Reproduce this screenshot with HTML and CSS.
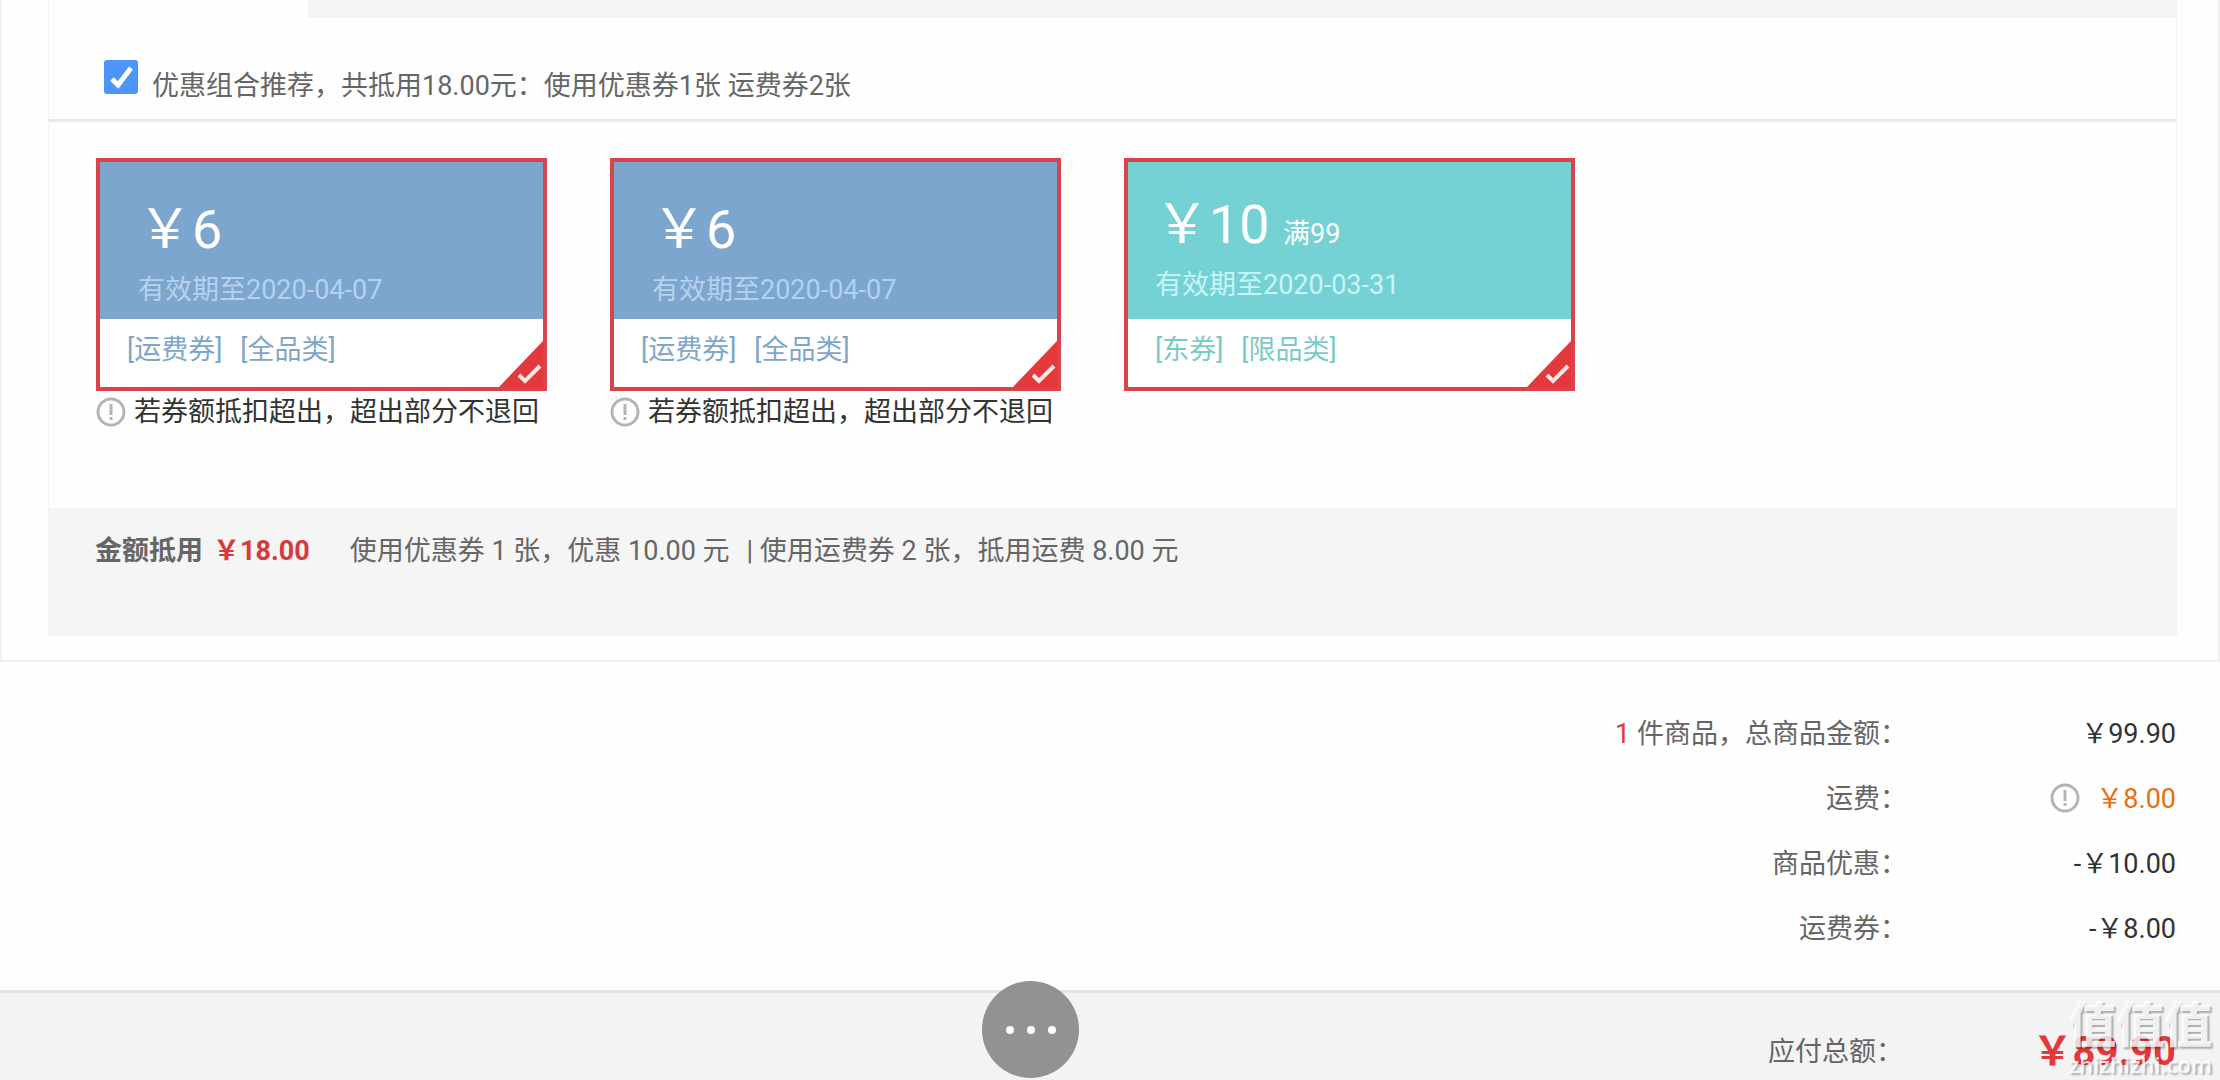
FILE: index.html
```html
<!DOCTYPE html>
<html lang="zh-CN">
<head>
<meta charset="utf-8">
<meta name="viewport" content="width=device-width, initial-scale=1">
<title>结算</title>
<link rel="stylesheet" href="styles.css">
</head>
<body>
<svg class="sprite" aria-hidden="true">
  <symbol id="icon-info" viewBox="0 0 30 30">
    <circle cx="15" cy="15" r="13" fill="none" stroke="#b4b4b4" stroke-width="3"/>
    <path d="M15 7v11M15 20v3" fill="none" stroke="#b4b4b4" stroke-width="3"/>
  </symbol>
  <symbol id="icon-corner" viewBox="0 0 44 46">
    <path d="M44 0V46H0Z" fill="#e4393c"/>
    <path d="M20 34l6 6L41 25" fill="none" stroke="#fde8e8" stroke-width="4"/>
  </symbol>
</svg>

<main class="checkout">
  <section class="discounts">
    <div class="panel">
      <div class="tabs"><div class="tab-active"></div></div>
      <label class="recommend">
        <span class="check">
          <input type="checkbox" checked>
          <svg viewBox="0 0 34 34" aria-hidden="true"><path d="M8 19l6 6L27 8" fill="none" stroke="#fff" stroke-width="5"/></svg>
        </span>
        <span class="recommend-text">优惠组合推荐，共抵用18.00元：使用优惠券1张 运费券2张</span>
      </label>
      <ul class="coupons">
        <li>
          <article class="coupon freight">
            <div class="coupon-top">
              <p class="amount">￥6</p>
              <p class="expiry">有效期至2020-04-07</p>
            </div>
            <p class="scope"><span>[运费券]</span><span>[全品类]</span></p>
            <svg class="corner" aria-hidden="true"><use href="#icon-corner"/></svg>
          </article>
          <p class="note"><svg class="info" aria-hidden="true"><use href="#icon-info"/></svg>若券额抵扣超出，超出部分不退回</p>
        </li>
        <li>
          <article class="coupon freight">
            <div class="coupon-top">
              <p class="amount">￥6</p>
              <p class="expiry">有效期至2020-04-07</p>
            </div>
            <p class="scope"><span>[运费券]</span><span>[全品类]</span></p>
            <svg class="corner" aria-hidden="true"><use href="#icon-corner"/></svg>
          </article>
          <p class="note"><svg class="info" aria-hidden="true"><use href="#icon-info"/></svg>若券额抵扣超出，超出部分不退回</p>
        </li>
        <li>
          <article class="coupon goods">
            <div class="coupon-top">
              <p class="amount">￥10 <small>满99</small></p>
              <p class="expiry">有效期至2020-03-31</p>
            </div>
            <p class="scope"><span>[东券]</span><span>[限品类]</span></p>
            <svg class="corner" aria-hidden="true"><use href="#icon-corner"/></svg>
          </article>
        </li>
      </ul>
      <div class="used">
        <strong class="used-title">金额抵用</strong>
        <strong class="used-sum">￥18.00</strong>
        <span class="used-goods">使用优惠券 1 张，优惠 10.00 元</span>
        <span>| 使用运费券 2 张，抵用运费 8.00 元</span>
      </div>
    </div>
  </section>

  <dl class="totals">
    <div class="row"><dt><em>1</em> 件商品，总商品金额：</dt><dd>￥99.90</dd></div>
    <div class="row"><dt>运费：</dt><dd class="fee"><svg class="info" aria-hidden="true"><use href="#icon-info"/></svg>￥8.00</dd></div>
    <div class="row"><dt>商品优惠：</dt><dd>-￥10.00</dd></div>
    <div class="row"><dt>运费券：</dt><dd>-￥8.00</dd></div>
  </dl>

  <footer class="payable">
    <span>应付总额：</span>
    <strong>￥89.90</strong>
  </footer>
</main>

<button class="more" type="button" aria-label="更多"><i></i><i></i><i></i></button>
<div class="watermark"><b>值值值</b><span>zhizhizhi.com</span></div>
</body>
</html>
```
FILE: styles.css
```css
* { box-sizing: border-box; }

body {
  margin: 0;
  background: #fefefe;
  color: #666;
  font: 27px/32px Roboto, "Noto Sans CJK SC", sans-serif;
}

p, ul, dl, dd { margin: 0; padding: 0; }
ul { list-style: none; }
em { font-style: normal; }
.sprite { display: none; }

.checkout {
  display: flex;
  flex-direction: column;
  min-height: 100vh;
}

/* Discount panel */
.discounts {
  padding: 0 41px 24px 46px;
  border: 2px solid #f0f0f0;
  border-top: 0;
}
.panel { border: solid #f3f3f3; border-width: 0 1px; }
.tabs { height: 18px; background: #f5f5f5; }
.tab-active { width: 259px; height: 100%; background: #fefefe; }

.recommend {
  display: flex;
  gap: 14px;
  padding: 42px 55px 17px;
  border-bottom: 3px solid #e9e9e9;
}
.recommend-text { padding-top: 10px; }
.check { display: grid; width: 34px; height: 34px; }
.check input, .check svg { grid-area: 1 / 1; width: 34px; height: 34px; margin: 0; }
.check input { appearance: none; border-radius: 3px; background: #4b96f8; }
.check svg { pointer-events: none; z-index: 1; }

/* Coupons */
.coupons {
  display: flex;
  flex-wrap: wrap;
  gap: 32px 63px;
  min-height: 386px;
  padding: 36px 47px;
}
.coupons li { width: 451px; }
.coupon {
  position: relative;
  border: 4px solid #d9434a;
  background: #fff;
}
.coupon-top { height: 157px; color: #fff; }
.freight .coupon-top { padding: 36px 38px 0; background: #7da6cf; }
.goods .coupon-top { padding: 31px 27px 0; background: #74d2d4; }
.amount { height: 64px; font-size: 54px; line-height: 64px; }
.amount small { font-size: 27px; }
.expiry { margin-top: 12px; }
.freight .expiry { color: #b3d2ee; }
.goods .expiry { color: #c9f5f6; }
.scope { display: flex; gap: 18px; height: 68px; padding: 15px 27px 0; }
.freight .scope { color: #7da6c8; }
.goods .scope { color: #79cac9; }
.corner { position: absolute; right: 0; bottom: 0; width: 44px; height: 46px; }
.note { display: flex; align-items: center; gap: 8px; padding-top: 5px; color: #333; }
.info { width: 30px; height: 30px; flex: none; }

.used {
  display: flex;
  flex-wrap: wrap;
  align-items: flex-start;
  min-height: 128px;
  padding: 27px 46px;
  background: #f5f5f5;
}
.used-title { margin-right: 10px; }
.used-sum { margin-right: 40px; color: #d9383c; }
.used-goods { margin-right: 17px; }

/* Totals */
.totals { padding: 40px 44px 28px; }
.row { display: flex; justify-content: flex-end; padding: 16px 0 17px; }
.row dd {
  display: flex;
  justify-content: flex-end;
  width: 269px;
  color: #333;
}
.row em { color: #e4393c; }
.row .fee { gap: 16px; color: #e67010; }

.payable {
  display: flex;
  flex: 1;
  align-items: flex-start;
  justify-content: flex-end;
  padding: 43px 44px 14px;
  border-top: 3px solid #e3e3e3;
  background: #f3f3f3;
}
.payable strong { width: 273px; color: #e4393c; font-size: 40px; text-align: right; }

/* Floating layers */
.more {
  position: fixed;
  left: 982px;
  bottom: 2px;
  display: flex;
  align-items: center;
  justify-content: center;
  gap: 13px;
  width: 97px;
  height: 97px;
  padding: 0;
  border: 0;
  border-radius: 50%;
  background: #929292;
}
.more i { width: 8px; height: 8px; border-radius: 50%; background: #fff; }

.watermark {
  position: fixed;
  right: 8px;
  bottom: 4px;
  color: rgba(255, 255, 255, .8);
  text-align: right;
  text-shadow: 2px 2px 2px rgba(0, 0, 0, .3);
  pointer-events: none;
}
.watermark b, .watermark span { display: block; }
.watermark b { font-weight: 900; font-size: 48px; line-height: 52px; }
.watermark span { font: 600 22px/24px "Open Sans", sans-serif; }
```
